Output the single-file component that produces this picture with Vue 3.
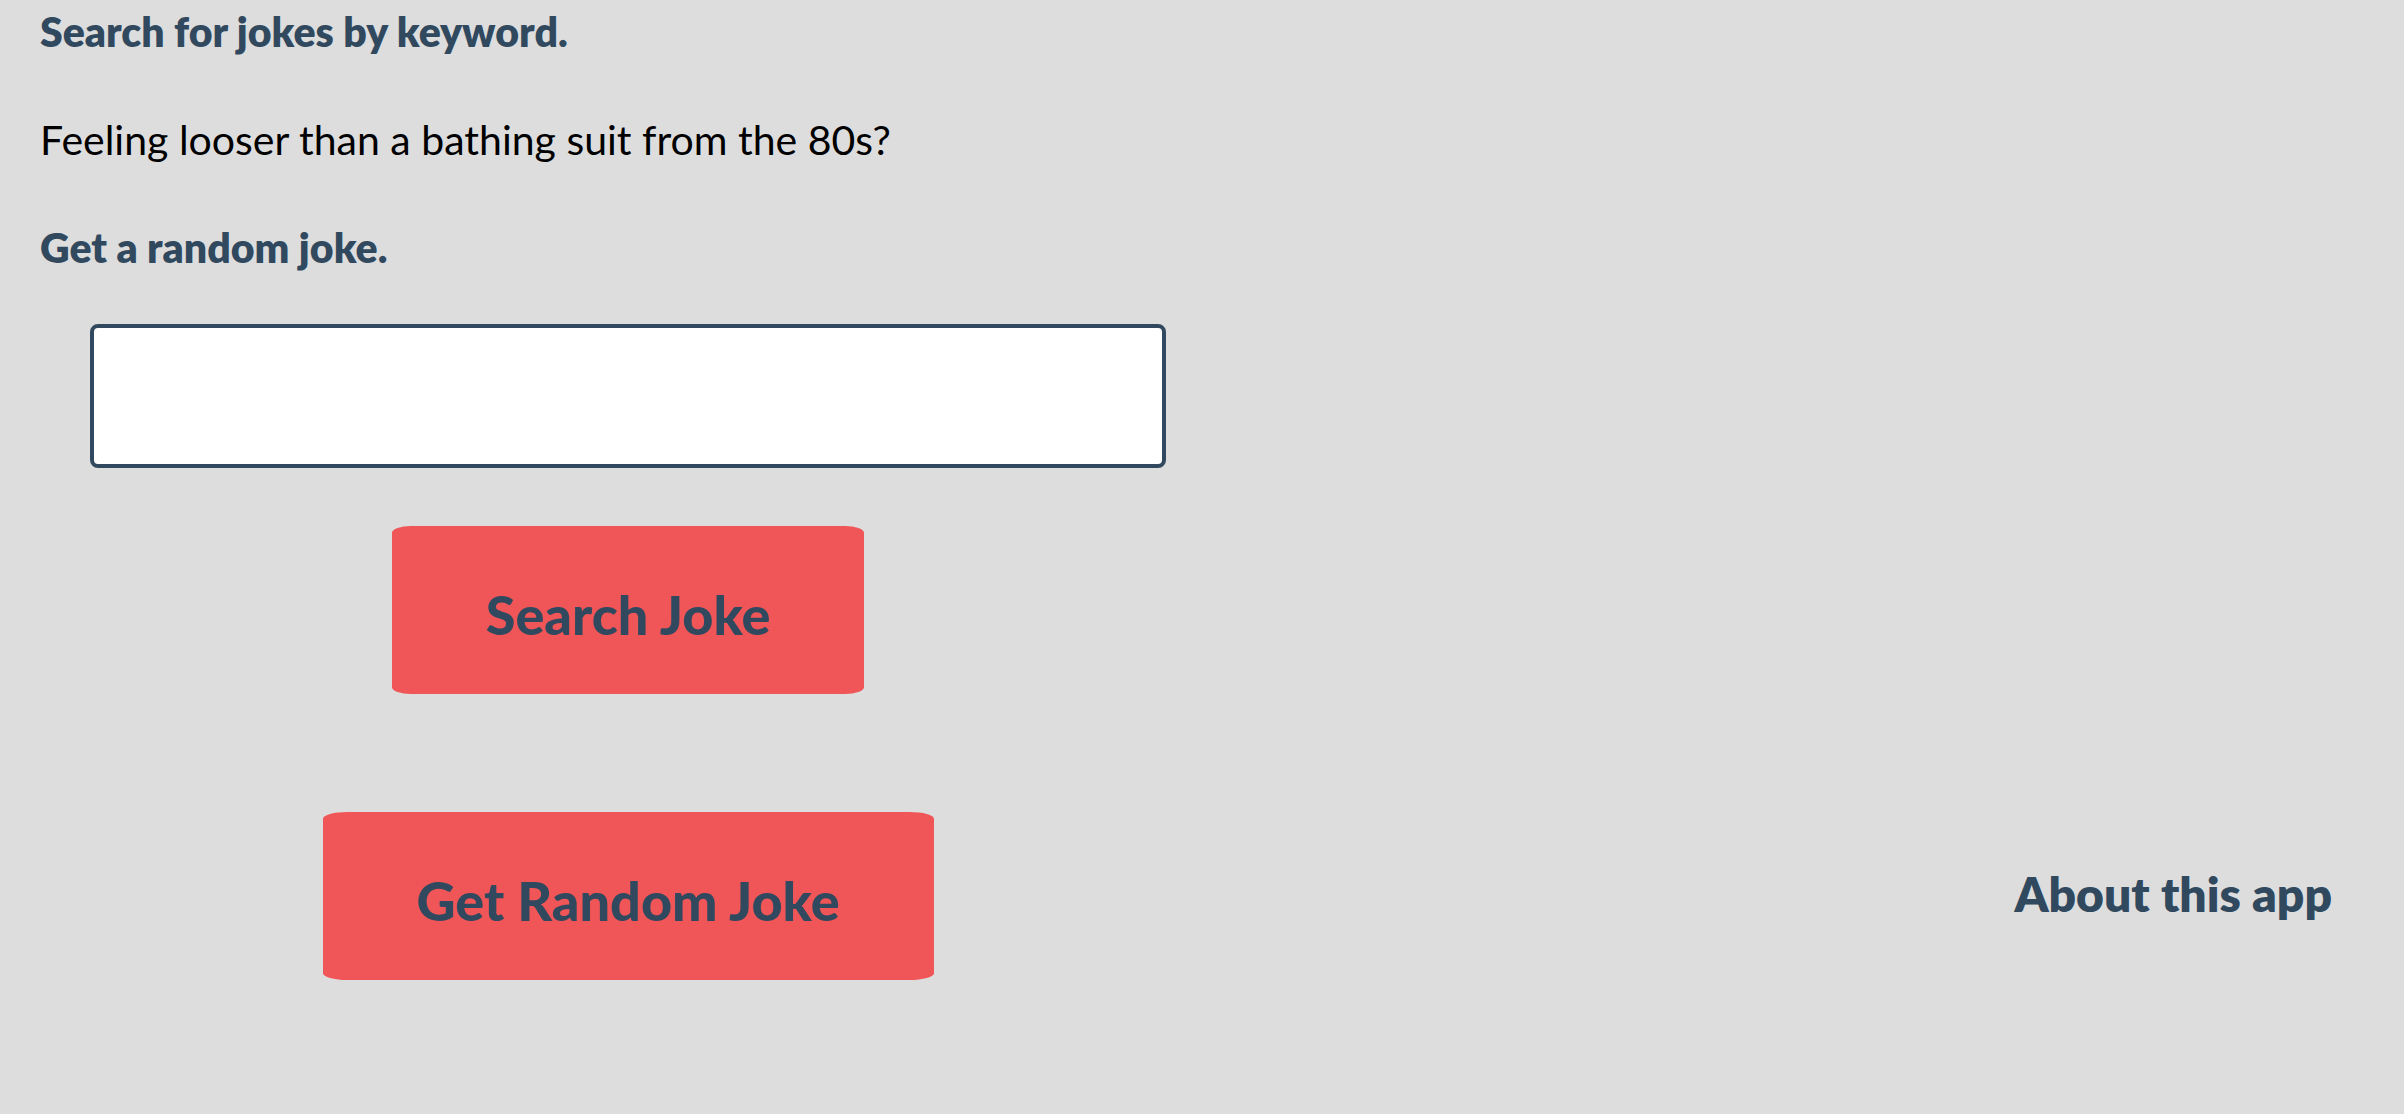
<script setup>
import { ref } from 'vue'

const keyword = ref('')
</script>

<template>
  <main class="page">
    <section class="intro">
      <p class="line strong">Search for jokes by keyword.</p>
      <p class="line">Feeling looser than a bathing suit from the 80s?</p>
      <p class="line strong">Get a random joke.</p>
    </section>
    <div class="lower">
      <form class="search" @submit.prevent>
        <input v-model="keyword" class="field" type="text" aria-label="Joke keyword" />
        <button class="btn" type="submit">Search Joke</button>
        <button class="btn" type="button">Get Random Joke</button>
      </form>
      <a class="about" href="#about">About this app</a>
    </div>
  </main>
</template>

<style>
body {
  margin: 0;
  background: #dddddd;
}
</style>

<style scoped>
.page {
  box-sizing: border-box;
  min-height: 100vh;
  padding: 0 40px;
  font-family: Lato, sans-serif;
  color: #000;
}
.line {
  margin: 0 0 44px;
  font-size: 41px;
  line-height: 64px;
}
.line:last-child {
  margin-bottom: 0;
}
.strong {
  font-weight: 800;
  color: #31495e;
}
.lower {
  display: flex;
  justify-content: space-between;
  align-items: flex-end;
  padding: 44px 32px 0 50px;
}
.search {
  display: flex;
  flex-direction: column;
  align-items: center;
  width: 48%;
}
.field {
  box-sizing: border-box;
  width: 100%;
  height: 144px;
  padding: 0 32px;
  border: 4px solid #31495e;
  border-radius: 8px;
  background: #fff;
  font: inherit;
  font-size: 44px;
}
.btn {
  margin-top: 58px;
  height: 168px;
  padding: 8px 94px 0;
  border: 0;
  border-radius: 4%;
  background: #f05658;
  color: #31495e;
  font: inherit;
  font-size: 54px;
  font-weight: 900;
}
.btn + .btn {
  margin-top: 118px;
}
.about {
  margin-bottom: 54px;
  color: #31495e;
  font-size: 48px;
  font-weight: 800;
  line-height: 64px;
  text-decoration: none;
}
</style>
